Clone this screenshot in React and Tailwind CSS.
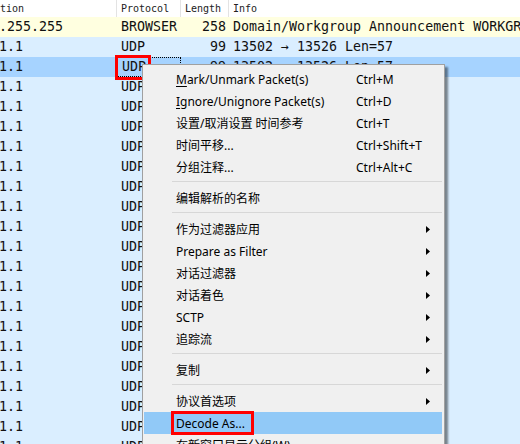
const rowFont = { fontFamily: '"DejaVu Sans Mono", "Liberation Mono", monospace' };

const packets = [
  { dst: '.255.255', proto: 'BROWSER', len: '258', info: 'Domain/Workgroup Announcement WORKGROUP, NT Workstation', bg: 'bg-[#ffffe0]' },
  { dst: '1.1', proto: 'UDP', len: '99', info: '13502 → 13526 Len=57', bg: 'bg-[#daeeff]' },
  { dst: '1.1', proto: 'UDP', len: '99', info: '13502 → 13526 Len=57', bg: 'bg-[#a6d3ff]', selected: true },
];
for (let i = 0; i < 19; i++) {
  packets.push({ dst: '1.1', proto: 'UDP', len: '99', info: '13502 → 13526 Len=57', bg: 'bg-[#daeeff]' });
}

const menu = [
  { label: 'Mark/Unmark Packet(s)', key: 'M', shortcut: 'Ctrl+M' },
  { label: 'Ignore/Unignore Packet(s)', key: 'I', shortcut: 'Ctrl+D' },
  { label: '设置/取消设置 时间参考', shortcut: 'Ctrl+T' },
  { label: '时间平移...', shortcut: 'Ctrl+Shift+T' },
  { label: '分组注释...', shortcut: 'Ctrl+Alt+C' },
  'sep',
  { label: '编辑解析的名称' },
  'sep',
  { label: '作为过滤器应用', sub: true },
  { label: 'Prepare as Filter', sub: true },
  { label: '对话过滤器', sub: true },
  { label: '对话着色', sub: true },
  { label: 'SCTP', sub: true },
  { label: '追踪流', sub: true },
  'sep',
  { label: '复制', sub: true },
  'sep',
  { label: '协议首选项', sub: true },
  { label: 'Decode As...', active: true, boxed: true },
  { label: '在新窗口显示分组(W)' },
];

function Label({ item }) {
  if (!item.key) return item.label;
  return (
    <>
      <span className="underline underline-offset-2">{item.key}</span>
      {item.label.slice(1)}
    </>
  );
}

function ContextMenu() {
  return (
    <div
      className="absolute left-[142px] top-[64px] w-[303px] h-[400px] bg-[#f0f0f0] border border-[#a0a0a0] shadow-[3px_3px_2px_rgba(0,0,0,0.45)] pt-[3px] pl-[1px] pr-[2px] text-[12px] text-black"
      style={{ fontFamily: '"Noto Sans", "Noto Sans CJK SC", sans-serif' }}
    >
      {menu.map((item, i) =>
        item === 'sep' ? (
          <div key={i} className="h-[9px] pt-[3px] pl-[28px]">
            <div className="h-px bg-[#d7d7d7]" />
          </div>
        ) : (
          <div
            key={i}
            className={`relative h-[22px] flex items-center pt-[2px] ${item.active ? 'bg-[#91c9f7]' : ''}`}
          >
            <span className="pl-[32px] w-[212px] whitespace-nowrap">
              <Label item={item} />
            </span>
            {item.shortcut && <span className="whitespace-nowrap">{item.shortcut}</span>}
            {item.sub && (
              <svg className="absolute left-[282px] top-[8px]" width="5" height="7" viewBox="0 0 5 7">
                <path d="M0 0 L4 3.5 L0 7 Z" fill="#000" />
              </svg>
            )}
            {item.boxed && (
              <div className="absolute left-[27px] top-[-1px] w-[83px] h-[24px] border-[3px] border-[#ff0000]" />
            )}
          </div>
        )
      )}
    </div>
  );
}

export default function App() {
  return (
    <div className="relative w-[520px] h-[444px] overflow-hidden bg-[#daeeff] text-[#111]" style={rowFont}>
      <div className="flex h-[17px] bg-white text-[10px] leading-[17px] text-[#222]">
        <div className="w-[117px] border-r border-[#e3e3e3] overflow-hidden whitespace-nowrap">tion</div>
        <div className="w-[64px] border-r border-[#e3e3e3] pl-[4px]">Protocol</div>
        <div className="w-[48px] border-r border-[#e3e3e3] pl-[4px]">Length</div>
        <div className="flex-1 pl-[4px]">Info</div>
      </div>
      {packets.map((p, i) => (
        <div key={i} className={`flex h-[20px] items-center text-[13.3px] whitespace-nowrap ${p.bg}`}>
          <div className="w-[117px] overflow-hidden">
            <span className="ml-[-1px]">{p.dst}</span>
          </div>
          <div className={`w-[64px] h-full flex items-center pl-[4px] ${p.selected ? 'border border-dotted border-black pl-[3px]' : ''}`}>
            {p.proto}
          </div>
          <div className="w-[48px] text-right pr-[3px]">{p.len}</div>
          <div className="flex-1 pl-[4px] overflow-hidden">{p.info}</div>
        </div>
      ))}
      <div className="absolute left-[115px] top-[55px] w-[36px] h-[25px] border-[3px] border-[#ff0000]" />
      <ContextMenu />
    </div>
  );
}
